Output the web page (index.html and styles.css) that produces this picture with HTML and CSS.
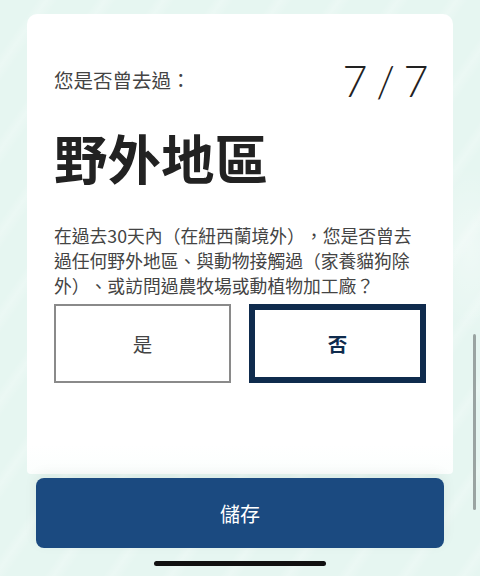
FILE: index.html
```html
<!DOCTYPE html>
<html lang="zh-Hant">
<head>
<meta charset="utf-8">
<link rel="stylesheet" href="styles.css">
</head>
<body>
<div class="screen">
  <div class="card">
    <div class="head">
      <span class="label">您是否曾去過：</span>
      <span class="count">7 / 7</span>
    </div>
    <h1 class="title">野外地區</h1>
    <p class="question">在過去30天內（在紐西蘭境外），您是否曾去過任何野外地區、與動物接觸過（家養貓狗除外）、或訪問過農牧場或動植物加工廠？</p>
    <div class="choices">
      <div class="choice">是</div>
      <div class="choice selected">否</div>
    </div>
  </div>
  <div class="save">儲存</div>
  <div class="home"></div>
  <div class="scrollbar"></div>
</div>
</body>
</html>
```

FILE: styles.css
```css
html, body {
  margin: 0;
  padding: 0;
}
body {
  width: 480px;
  height: 576px;
  overflow: hidden;
  font-family: "Noto Sans CJK TC", "Noto Sans", sans-serif;
  text-spacing-trim: space-all;
  background-color: #e6f6f1;
  background-image:
    radial-gradient(ellipse 60px 120px at 470px 250px, rgba(255,255,255,0.35), rgba(255,255,255,0) 70%),
    repeating-linear-gradient(125deg, rgba(255,255,255,0) 0px, rgba(255,255,255,0) 30px, rgba(255,255,255,0.22) 38px, rgba(255,255,255,0) 48px);
}
.screen {
  position: relative;
  width: 480px;
  height: 576px;
  display: flex;
  flex-direction: column;
  align-items: center;
}
.card {
  box-sizing: border-box;
  width: 426px;
  height: 460px;
  margin-top: 14px;
  align-self: flex-start;
  margin-left: 27px;
  background: linear-gradient(#fff 0, #fff 430px, #fbfefd 460px);
  border-radius: 10px 10px 4px 4px;
  padding: 41px 27px 0 27px;
  display: flex;
  flex-direction: column;
}
.head {
  display: flex;
  justify-content: space-between;
  align-items: center;
  height: 48px;
}
.label {
  font-size: 19.5px;
  color: #444;
  padding-top: 0;
}
.count {
  font-family: "Lato", "Open Sans", sans-serif;
  font-weight: 300;
  font-size: 43px;
  color: #222;
  letter-spacing: -1.5px;
  margin-right: -1px;
  padding-top: 2px;
}
.title {
  margin: 22px 0 0 0;
  font-size: 53.5px;
  line-height: 64px;
  font-weight: 700;
  color: #222;
}
.question {
  margin: 34px 0 0 0;
  font-size: 17.8px;
  line-height: 24.8px;
  color: #444;
}
.choices {
  display: grid;
  grid-template-columns: 1fr 1fr;
  gap: 18px;
  margin-top: 7px;
}
.choice {
  box-sizing: border-box;
  height: 79px;
  border: 2px solid #8a8a8a;
  display: flex;
  align-items: center;
  justify-content: center;
  font-size: 19.5px;
  color: #444;
}
.choice.selected {
  border: 6px solid #0f2b4d;
  color: #0f2b4d;
  font-weight: 700;
}
.save {
  box-sizing: border-box;
  width: 408px;
  height: 70px;
  margin-top: 4px;
  background: #1b4a80;
  border-radius: 8px;
  color: #fff;
  font-size: 20px;
  display: flex;
  align-items: center;
  justify-content: center;
  box-shadow: 0 -4px 14px rgba(0,0,0,0.06);
}
.home {
  width: 172px;
  height: 5px;
  margin-top: 13px;
  background: #111;
  border-radius: 3px;
}
.scrollbar {
  position: absolute;
  left: 473px;
  top: 334px;
  width: 3px;
  height: 176px;
  border-radius: 2px;
  background: #9aa4a2;
}
```
